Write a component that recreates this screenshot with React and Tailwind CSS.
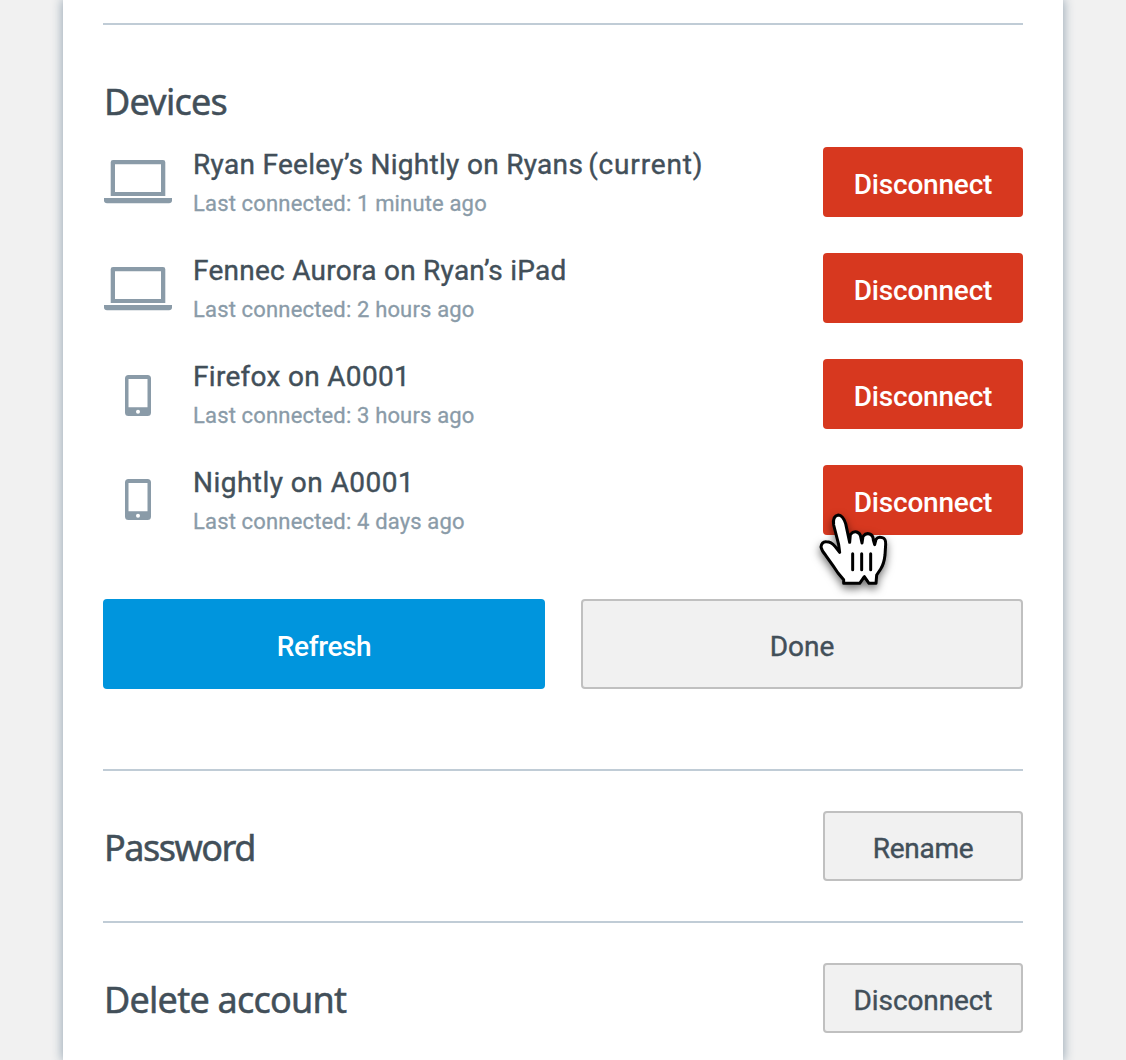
const LaptopIcon = () => (
  <svg width="68" height="44" viewBox="0 0 68 44" fill="#8a9ba8" aria-hidden="true">
    <path fillRule="evenodd" d="M9 0h50a2.3 2.3 0 0 1 2.3 2.3V36H6.7V2.3A2.3 2.3 0 0 1 9 0Zm2 4.3V32h46V4.3Z" />
    <path d="M0 38h68v2a3 3 0 0 1-3 3.2H3A3 3 0 0 1 0 40Z" />
  </svg>
);

const PhoneIcon = () => (
  <svg width="26" height="41" viewBox="0 0 26 41" fill="#8a9ba8" aria-hidden="true">
    <path fillRule="evenodd" d="M3.5 0h19A3.5 3.5 0 0 1 26 3.5v34a3.5 3.5 0 0 1-3.5 3.5h-19A3.5 3.5 0 0 1 0 37.5v-34A3.5 3.5 0 0 1 3.5 0Zm0 4v28.2h19V4ZM13 34.7a2 2 0 1 0 0 4 2 2 0 0 0 0-4Z" />
  </svg>
);

const HandCursor = () => (
  <svg className="pointer-events-none absolute -left-[13px] top-[40px] overflow-visible drop-shadow-[0_4px_4px_rgba(0,0,0,0.55)]" width="90" height="100" viewBox="30 165 270 300" aria-hidden="true">
    <path
      d="M131 400V389L114 369L99 347L77 316Q65 302 63 291Q65 274 79 275Q94 275 105 289L119 307L116 284L101 225Q97 198 115 195Q129 196 137 221L149 277L151 254Q160 243 170 246Q181 250 182 260L186 279L189 259Q198 248 209 252Q220 256 220 270L224 284L228 268Q234 259 247 263Q258 266 257 283L255 315Q252 342 242 357L230 375L228 400H207L193 380L179 400Z"
      fill="#fff" stroke="#000" strokeWidth="9" strokeLinejoin="round"
    />
    <path d="M158 311v48M185 311v48M212 311v48" stroke="#000" strokeWidth="9" strokeLinecap="round" />
  </svg>
);

const Text = ({ className, children }) => <span className={`block whitespace-nowrap ${className}`}>{children}</span>;

const devices = [
  { name: "Ryan Feeley’s Nightly on Ryans", current: true, seen: "1 minute ago", Icon: LaptopIcon, icon: "pt-[13px]", spacing: "tracking-[0.3px]" },
  { name: "Fennec Aurora on Ryan’s iPad", seen: "2 hours ago", Icon: LaptopIcon, icon: "pt-[14px]", spacing: "tracking-[0.26px]" },
  { name: "Firefox on A0001", seen: "3 hours ago", Icon: PhoneIcon, icon: "pt-[16px]", spacing: "tracking-[0.3px]" },
  { name: "Nightly on A0001", seen: "4 days ago", Icon: PhoneIcon, icon: "pt-[14px]", spacing: "tracking-[0.47px]", hover: true },
];

const base = "relative flex shrink-0 items-center justify-center rounded-[4px] pt-1.5 text-[28px] leading-8";
const grey = "border-2 border-[#c0c0c0] bg-[#f1f1f1] text-[#424f59] [-webkit-text-stroke:0.4px]";
const heading = "pl-[1px] font-['Noto_Sans',sans-serif] text-[36px] leading-[42px] [-webkit-text-stroke:0.5px]";

export default function App() {
  return (
    <div className="h-[1060px] overflow-hidden bg-[#f1f1f1] font-['Roboto',sans-serif] text-[#424f59]">
      <main className="mx-auto h-full w-[1000px] bg-white px-10 pt-[23px] shadow-[0_0_10px_1px_#9aa9b6]">
        <section className="h-[746px] border-t-2 border-[#c0ccd6] pt-[56px]">
          <h2 className={`${heading} h-[66px] tracking-[-0.75px]`}>Devices</h2>
          <ul className="flex flex-col gap-9">
            {devices.map(({ name, current, seen, Icon, icon, spacing, hover }) => (
              <li key={name} className="flex h-[70px]">
                <div className={`flex w-[70px] items-start justify-center ${icon}`}><Icon /></div>
                <div className="ml-5 flex-1">
                  <div className="flex text-[28px] leading-9 [-webkit-text-stroke:0.4px]">
                    <Text className={spacing}>{name}</Text>
                    {current && <Text className="ml-[5px] tracking-[0.85px]">(current)</Text>}
                  </div>
                  <Text className="mt-[5px] text-[22px] leading-8 tracking-[0.16px] text-[#8a9ba8] [-webkit-text-stroke:0.3px]">Last connected: {seen}</Text>
                </div>
                <button className={`${base} h-[70px] w-[200px] bg-[#d7381f] font-medium text-white`}>
                  <Text className="tracking-[-0.2px]">Disconnect</Text>
                  {hover && <HandCursor />}
                </button>
              </li>
            ))}
          </ul>
          <div className="mt-16 grid grid-cols-2 gap-9">
            <button className={`${base} h-[90px] bg-[#0095dd] font-medium tracking-[-0.4px] text-white`}>Refresh</button>
            <button className={`${base} ${grey} h-[90px]`}>Done</button>
          </div>
        </section>
        <section className="flex h-[152px] justify-between border-t-2 border-[#c0ccd6] pt-10">
          <h2 className={`${heading} pt-4 tracking-[-1.5px]`}>Password</h2>
          <button className={`${base} ${grey} h-[70px] w-[200px] tracking-[-0.3px]`}>Rename</button>
        </section>
        <section className="flex justify-between border-t-2 border-[#c0ccd6] pt-10">
          <h2 className={`${heading} pt-4 tracking-[-0.75px]`}>Delete account</h2>
          <button className={`${base} ${grey} h-[70px] w-[200px] tracking-[-0.1px]`}>Disconnect</button>
        </section>
      </main>
    </div>
  );
}
